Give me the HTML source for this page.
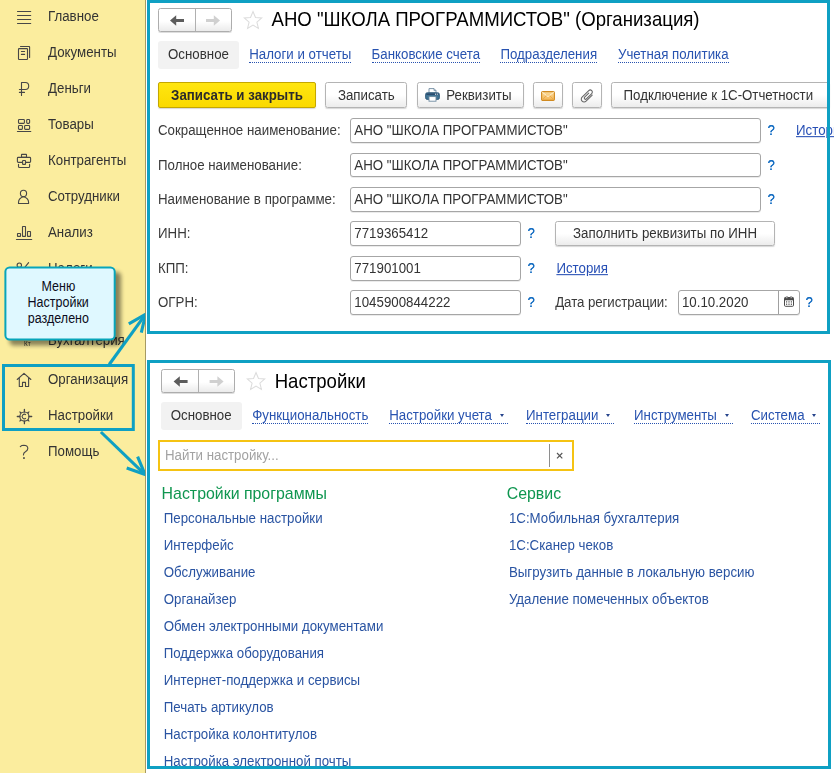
<!DOCTYPE html>
<html lang="ru">
<head>
<meta charset="utf-8">
<title>1C</title>
<style>
*{box-sizing:border-box;margin:0;padding:0}
html,body{width:834px;height:773px;overflow:hidden;background:#fff}
body{font-family:"Liberation Sans",sans-serif;font-size:13.3px;color:#333;position:relative}
.abs{position:absolute;white-space:nowrap}
.t{display:inline-block;transform:scaleY(1.055);transform-origin:50% 62%}
#side{position:absolute;left:0;top:0;width:146px;height:773px;background:#fbed9e;border-right:1px solid #a69a63}
.mi{position:absolute;left:48px;height:20px;line-height:20px;font-size:13.3px;color:#333;white-space:nowrap;transform:scaleY(1.055);transform-origin:0 62%}
.panel{position:absolute}
.frame{position:absolute;border:3px solid #0fa0c3;pointer-events:none}
.nav{position:absolute;height:24px;border:1px solid #adadad;border-radius:2.5px;background:linear-gradient(#fff 55%,#ebebeb);box-shadow:0 1px 0 rgba(0,0,0,.13)}
.nav i{position:absolute;left:35.6px;top:0;width:1px;height:22px;background:#b0b0b0}
.nav svg{position:absolute;top:0;left:0}
.star{position:absolute;width:20px;height:20px}
.title{position:absolute;font-size:18.6px;color:#000;white-space:nowrap;height:24px;line-height:24px;transform:scaleY(1.055);transform-origin:0 62%}
.tabsel{position:absolute;height:28px;line-height:28px;background:#f2f2f2;border-radius:3px;text-align:center;color:#333}
.tl{position:absolute;height:28px;line-height:28px;color:#2853b0;white-space:nowrap}
.tl span.u{display:inline-block;height:15px;line-height:14px;border-bottom:1px dotted #2853b0}
.tl b{display:inline-block;width:0;height:0;line-height:0;border-left:2.6px solid transparent;border-right:2.6px solid transparent;border-top:3px solid #27448c;vertical-align:2.4px;margin-left:4.2px;margin-right:4px}
.btn{position:absolute;height:26px;line-height:25.6px;border:1px solid #b4b4b4;border-radius:2.5px;background:linear-gradient(#fff 50%,#ececec);text-align:center;color:#333;white-space:nowrap;box-shadow:0 1px 1px rgba(0,0,0,.16)}
.btn.y{background:linear-gradient(#ffe610,#fad900);border-color:#c4a700;font-weight:bold;color:#2b2b2b;border-radius:2px}
.lbl{position:absolute;left:8px;height:24px;line-height:24px;white-space:nowrap;color:#3a3a3a;transform:scaleY(1.055);transform-origin:0 62%}
.inp{position:absolute;height:24.5px;line-height:24.6px;border:1px solid #a6a6a6;border-radius:3px;background:#fff;padding-left:3.3px;color:#333;white-space:nowrap;box-shadow:0 1px 0 rgba(0,0,0,.08)}
.q{position:absolute;width:12px;text-align:center;height:24px;line-height:24px;color:#176fc3;font-size:12.9px;transform:scaleY(1.12);transform-origin:50% 62%;text-shadow:.25px 0 0 #176fc3}
.lnk{position:absolute;height:24px;line-height:24px;color:#274fb5;text-decoration:underline;white-space:nowrap;transform:scaleY(1.055);transform-origin:0 62%}
.h{position:absolute;font-size:15.9px;color:#0f9650;white-space:nowrap;height:22px;line-height:22px;transform:scaleY(1.055);transform-origin:0 62%}
.sl{position:absolute;color:#2a54a2;white-space:nowrap;height:20px;line-height:20px;transform:scaleY(1.055);transform-origin:0 62%}
</style>
</head>
<body>
<div id="side">
  <div class="mi" style="top:7px">Главное</div>
  <div class="mi" style="top:43px">Документы</div>
  <div class="mi" style="top:79px">Деньги</div>
  <div class="mi" style="top:115px">Товары</div>
  <div class="mi" style="top:151px">Контрагенты</div>
  <div class="mi" style="top:187px">Сотрудники</div>
  <div class="mi" style="top:223px">Анализ</div>
  <div class="mi" style="top:259px">Налоги</div>
  <div class="mi" style="top:331px">Бухгалтерия</div>
  <div class="mi" style="top:370px">Организация</div>
  <div class="mi" style="top:406px">Настройки</div>
  <div class="mi" style="top:442px">Помощь</div>
  <svg class="abs" style="left:0;top:0" width="146" height="773" viewBox="0 0 146 773" fill="none" stroke="#474747" stroke-width="1.1" stroke-linecap="round" stroke-linejoin="round">
    <!-- hamburger -->
    <path d="M17.5 11.5H30.7M17.5 15.5H30.7M17.5 19.5H30.7M17.5 23.5H30.7"/>
    <!-- documents -->
    <rect x="18.5" y="48.6" width="9" height="10.9" rx="0.6"/>
    <path d="M20.5 46.5H29.2Q29.6 46.5 29.6 46.9V57.4M21.4 51.5H24.6M21.4 54.4H24.6"/>
    <!-- ruble -->
    <path d="M21.5 95.5V82.5H25.4Q28.7 82.5 28.7 86T25.4 89.5H19.4M19.4 92.4H24.5"/>
    <!-- goods -->
    <rect x="18.5" y="119.5" width="5.9" height="3.9" rx="0.8"/>
    <rect x="26.7" y="119.5" width="2.9" height="3.9" rx="0.8"/>
    <rect x="18.5" y="125.5" width="3.9" height="3.9" rx="0.8"/>
    <rect x="24.6" y="125.5" width="5" height="3.9" rx="0.8"/>
    <path d="M17.4 131.5H30.8"/>
    <!-- briefcase -->
    <rect x="21.5" y="154.4" width="5" height="3" rx="0.3"/>
    <rect x="17.4" y="157.4" width="13.2" height="5" rx="0.9"/>
    <rect x="22.6" y="160.5" width="2.9" height="3.9" rx="0.5" fill="#fbed9e"/>
    <path d="M18.5 164.4V166.5Q18.5 167.5 19.5 167.5H28.6Q29.6 167.5 29.6 166.5V164.4"/>
    <!-- person -->
    <circle cx="23.5" cy="193.4" r="3.1"/>
    <path d="M18.5 203.5H28.6V202.5Q28.6 198 23.5 196.7Q18.5 198 18.5 202.5Z"/>
    <!-- chart -->
    <rect x="17.5" y="233.5" width="3" height="2.9" rx="0.3"/>
    <rect x="22.5" y="226.5" width="3" height="9.9" rx="0.3"/>
    <rect x="27.5" y="231.5" width="3" height="4.9" rx="0.3"/>
    <path d="M16.4 239.5H31.7"/>
    <!-- percent (taxes) -->
    <circle cx="19.3" cy="265.2" r="2.2"/>
    <circle cx="27.7" cy="272.8" r="2.2"/>
    <path d="M28.6 262.6L18.4 275.4"/>
    <!-- home -->
    <path d="M17.2 379.5L24 373.3L30.9 379.5M19.3 377.8V386.5H22.5V382.4H25.5V386.5H28.6V377.8"/>
    <!-- gear -->
    <circle cx="24.4" cy="416.5" r="4.55" stroke-width="1.15"/>
    <path d="M24.4 409.3V411.9M24.4 421.1V423.7M17.3 416.5H19.8M29 416.5H31.7" stroke-width="1.3"/>
    <path d="M28.73 414.00L29.56 411.34L26.90 412.17ZM21.90 412.17L19.24 411.34L20.07 414.00ZM20.07 419.00L19.24 421.66L21.90 420.83ZM26.90 420.83L29.56 421.66L28.73 419.00Z" fill="#474747" stroke="none"/>
    <path d="M25.91 414.83A2.25 2.25 0 1 0 25.91 418.17" stroke-width="1.05" stroke-linecap="butt"/>
    <!-- help -->
    <path d="M20.3 446.6Q21.6 445.3 23.8 445.3Q27.9 445.5 27.8 448.6Q27.6 450.4 25.4 451.8Q23.4 453 23.4 454.9"/>
    <rect x="23.1" y="457.2" width="1.7" height="1.7" fill="#474747" stroke="none"/>
  </svg>
  <div class="abs" style="left:16.5px;top:328.5px;font-size:8px;line-height:10px;color:#333;transform:scale(.8,1);transform-origin:0 0">Дт</div>
  <div class="abs" style="left:23.8px;top:339.3px;font-size:8px;line-height:10px;color:#333;transform:scale(.8,1);transform-origin:0 0">Кт</div>
</div>
<div class="panel" style="left:150px;top:3px;width:684px;height:331px">
  <div class="nav" style="left:8px;top:5px;width:74px"><i></i><svg width="72" height="22" viewBox="0 0 72 22"><path d="M11 11.5 L17.2 6.3 V9.9 H25 V13.1 H17.2 V16.7 Z" fill="#5c5c5c"/><path d="M61 11.5 L54.8 6.3 V9.9 H47 V13.1 H54.8 V16.7 Z" fill="#d0d0d0"/></svg></div>
  <svg class="star" style="left:92.9px;top:7.2px" viewBox="0 0 21 21"><path d="M10.5 1.6 L13.1 7.9 L19.7 8.4 L14.6 12.8 L16.2 19.4 L10.5 15.9 L4.8 19.4 L6.4 12.8 L1.3 8.4 L7.9 7.9 Z" fill="#fff" stroke="#dcdcdc" stroke-width="1.1"/></svg>
  <div class="title" style="left:121.5px;top:5px">АНО "ШКОЛА ПРОГРАММИСТОВ" (Организация)</div>
  <div class="tabsel" style="left:8px;top:38px;width:81px"><span class="t">Основное</span></div>
  <div class="tl" style="left:99.2px;top:38px"><span class="u"><span class="t">Налоги и отчеты</span></span></div>
  <div class="tl" style="left:221.6px;top:38px"><span class="u"><span class="t">Банковские счета</span></span></div>
  <div class="tl" style="left:350.4px;top:38px"><span class="u"><span class="t">Подразделения</span></span></div>
  <div class="tl" style="left:468px;top:38px"><span class="u"><span class="t">Учетная политика</span></span></div>
  <div class="btn y" style="left:8px;top:79px;width:158px"><span class="t">Записать и закрыть</span></div>
  <div class="btn" style="left:175.2px;top:79px;width:82.3px"><span class="t">Записать</span></div>
  <div class="btn" style="left:267px;top:79px;width:106.5px;text-align:left;padding-left:28.3px"><span class="t">Реквизиты</span>
    <svg style="position:absolute;left:7px;top:5.4px" width="15" height="14" viewBox="0 0 15 14"><path d="M4 5V0.6H9L11 2.6V5Z" fill="#fff" stroke="#6f8aa0" stroke-width=".9"/><path d="M9 0.6V2.6H11" fill="none" stroke="#6f8aa0" stroke-width=".8"/><rect x="0.6" y="4.8" width="13.8" height="6.6" rx="1.6" fill="#3f7393" stroke="#2f5878" stroke-width=".9"/><rect x="1.4" y="5.4" width="12.2" height="1.6" rx=".6" fill="#2b4a6c"/><rect x="10" y="5.7" width="1" height="1" fill="#fff"/><rect x="11.8" y="5.7" width="1" height="1" fill="#fff"/><rect x="4" y="8.6" width="7" height="4.6" fill="#fff" stroke="#6f8aa0" stroke-width=".9"/></svg>
  </div>
  <div class="btn" style="left:383.2px;top:79px;width:29.6px">
    <svg style="position:absolute;left:7px;top:8.4px" width="14" height="10" viewBox="0 0 14 10"><defs><linearGradient id="mg" x1="0" y1="0" x2="0" y2="1"><stop offset="0" stop-color="#fbdc9c"/><stop offset="1" stop-color="#f4b453"/></linearGradient></defs><rect x="0.6" y="0.6" width="12.8" height="8.8" rx="1.2" fill="url(#mg)" stroke="#d08a20" stroke-width="1.1"/><path d="M1.2 1.2L7 5.6L12.8 1.2" fill="none" stroke="#fff1d0" stroke-width="1"/><path d="M1.2 8.8L5.4 4.6M12.8 8.8L8.6 4.6" fill="none" stroke="#e9a94a" stroke-width=".9"/></svg>
  </div>
  <div class="btn" style="left:422.2px;top:79px;width:29.6px">
    <svg style="position:absolute;left:0;top:0" width="28" height="24" viewBox="0 0 28 24"><g transform="translate(9.1,18.2) rotate(-45)" fill="none" stroke="#666" stroke-width="1.05" stroke-linecap="round"><path d="M11.5 2.8H2.8A2.8 2.8 0 0 1 2.8 -2.8H12.2A2.1 2.1 0 0 1 12.2 1.4H4.6A1.2 1.2 0 0 1 4.6 -1H10.4"/></g></svg>
  </div>
  <div class="btn" style="left:461px;top:79px;width:218.5px;text-align:left;padding-left:11.6px;letter-spacing:-.03px"><span class="t">Подключение к 1С-Отчетности</span></div>
  <div class="lbl" style="top:116.1px">Сокращенное наименование:</div>
  <div class="inp" style="left:200px;top:115.1px;width:411px"><span class="t">АНО "ШКОЛА ПРОГРАММИСТОВ"</span></div>
  <div class="q" style="left:615px;top:116.1px">?</div>
  <div class="lbl" style="top:150.7px">Полное наименование:</div>
  <div class="inp" style="left:200px;top:149.7px;width:411px"><span class="t">АНО "ШКОЛА ПРОГРАММИСТОВ"</span></div>
  <div class="q" style="left:615px;top:150.7px">?</div>
  <div class="lbl" style="top:185.2px">Наименование в программе:</div>
  <div class="inp" style="left:200px;top:184.2px;width:411px"><span class="t">АНО "ШКОЛА ПРОГРАММИСТОВ"</span></div>
  <div class="q" style="left:615px;top:185.2px">?</div>
  <div class="lbl" style="top:219.1px">ИНН:</div>
  <div class="inp" style="left:200px;top:218.1px;width:171px"><span class="t">7719365412</span></div>
  <div class="q" style="left:375px;top:219.1px">?</div>
  <div class="lbl" style="top:254.2px">КПП:</div>
  <div class="inp" style="left:200px;top:253.2px;width:171px"><span class="t">771901001</span></div>
  <div class="q" style="left:375px;top:254.2px">?</div>
  <div class="lbl" style="top:288.1px">ОГРН:</div>
  <div class="inp" style="left:200px;top:287.1px;width:171px"><span class="t">1045900844222</span></div>
  <div class="q" style="left:375px;top:288.1px">?</div>
  <div class="lnk" style="left:646px;top:116.1px">История</div>
  <div class="btn" style="left:405px;top:218px;width:220px;height:25px;line-height:24.4px"><span class="t">Заполнить реквизиты по ИНН</span></div>
  <div class="lnk" style="left:406.4px;top:254.2px">История</div>
  <div class="lbl" style="left:405.2px;top:288.1px;letter-spacing:-.08px">Дата регистрации:</div>
  <div class="inp" style="left:527.6px;top:287.1px;width:122px"><span class="t">10.10.2020</span>
    <i style="position:absolute;left:99.6px;top:0;width:1px;height:23px;background:#a0a0a0"></i>
    <svg style="position:absolute;left:105.3px;top:5.2px" width="10" height="11" viewBox="0 0 10 11"><rect x="0.5" y="1.5" width="9" height="8.8" rx="1" fill="#fff" stroke="#4a4a4a" stroke-width="1"/><rect x="0.5" y="1.5" width="9" height="2.8" fill="#4a4a4a"/><rect x="2.2" y="0.3" width="1.3" height="2" rx=".5" fill="#fff" stroke="#4a4a4a" stroke-width=".5"/><rect x="6.5" y="0.3" width="1.3" height="2" rx=".5" fill="#fff" stroke="#4a4a4a" stroke-width=".5"/><g fill="#4a4a4a"><rect x="2" y="5.3" width="1.2" height="1.2"/><rect x="4.4" y="5.3" width="1.2" height="1.2"/><rect x="6.8" y="5.3" width="1.2" height="1.2"/><rect x="2" y="7.6" width="1.2" height="1.2"/><rect x="4.4" y="7.6" width="1.2" height="1.2"/><rect x="6.8" y="7.6" width="1.2" height="1.2"/></g></svg>
  </div>
  <div class="q" style="left:653px;top:288.1px">?</div>
</div>
<div class="panel" style="left:150px;top:363px;width:684px;height:403px;overflow:hidden">
  <div class="nav" style="left:10.7px;top:6px;width:74.5px"><i style="left:36.5px"></i><svg width="72" height="22" viewBox="-0.6 0 72 22"><path d="M11 11.5 L17.2 6.3 V9.9 H25 V13.1 H17.2 V16.7 Z" fill="#5c5c5c"/><path d="M61 11.5 L54.8 6.3 V9.9 H47 V13.1 H54.8 V16.7 Z" fill="#d0d0d0"/></svg></div>
  <svg class="star" style="left:95.9px;top:7.9px" viewBox="0 0 21 21"><path d="M10.5 1.6 L13.1 7.9 L19.7 8.4 L14.6 12.8 L16.2 19.4 L10.5 15.9 L4.8 19.4 L6.4 12.8 L1.3 8.4 L7.9 7.9 Z" fill="#fff" stroke="#dcdcdc" stroke-width="1.1"/></svg>
  <div class="title" style="left:124.7px;top:7px">Настройки</div>
  <div class="tabsel" style="left:10.7px;top:38.7px;width:81px"><span class="t">Основное</span></div>
  <div class="tl" style="left:102.2px;top:38.8px"><span class="u"><span class="t">Функциональность</span></span></div>
  <div class="tl" style="left:239.2px;top:38.8px"><span class="u"><span class="t">Настройки учета</span> <b></b></span></div>
  <div class="tl" style="left:376px;top:38.8px"><span class="u"><span class="t">Интеграции</span> <b></b></span></div>
  <div class="tl" style="left:484px;top:38.8px"><span class="u"><span class="t">Инструменты</span> <b></b></span></div>
  <div class="tl" style="left:601px;top:38.8px"><span class="u"><span class="t">Система</span> <b></b></span></div>
  <div class="abs" style="left:8px;top:77px;width:416px;height:31px;border:2px solid #f5c313;border-radius:0;background:#fff">
    <div class="abs" style="left:5px;top:-0.2px;height:27px;line-height:27px;color:#a2a2a2"><span class="t">Найти настройку...</span></div>
    <i class="abs" style="left:389px;top:2px;width:1px;height:23px;background:#8e8e8e"></i>
    <svg class="abs" style="left:394px;top:8px" width="12" height="12" viewBox="0 0 12 12"><path d="M3 3L8.3 8.3M8.3 3L3 8.3" stroke="#555" stroke-width="1.15" fill="none"/></svg>
  </div>
  <div class="h" style="left:11.6px;top:120px">Настройки программы</div>
  <div class="h" style="left:356.7px;top:120px">Сервис</div>
  <div class="sl" style="left:13.7px;top:145.7px">Персональные настройки</div>
  <div class="sl" style="left:13.7px;top:172.7px">Интерфейс</div>
  <div class="sl" style="left:13.7px;top:199.7px">Обслуживание</div>
  <div class="sl" style="left:13.7px;top:226.7px">Органайзер</div>
  <div class="sl" style="left:13.7px;top:253.7px">Обмен электронными документами</div>
  <div class="sl" style="left:13.7px;top:280.7px">Поддержка оборудования</div>
  <div class="sl" style="left:13.7px;top:307.7px">Интернет-поддержка и сервисы</div>
  <div class="sl" style="left:13.7px;top:334.7px">Печать артикулов</div>
  <div class="sl" style="left:13.7px;top:361.7px">Настройка колонтитулов</div>
  <div class="sl" style="left:13.7px;top:388.7px">Настройка электронной почты</div>
  <div class="sl" style="left:358.9px;top:145.7px">1С:Мобильная бухгалтерия</div>
  <div class="sl" style="left:358.9px;top:172.7px">1С:Сканер чеков</div>
  <div class="sl" style="left:358.9px;top:199.7px">Выгрузить данные в локальную версию</div>
  <div class="sl" style="left:358.9px;top:226.7px">Удаление помеченных объектов</div>
</div>
<div class="frame" style="left:147px;top:0;width:683px;height:334px"></div>
<div class="frame" style="left:147px;top:360px;width:684px;height:409px"></div>
<div class="abs" style="left:147px;top:766px;width:687px;height:7px;background:#fff"></div>
<div class="abs" style="left:147px;top:766px;width:684px;height:3px;background:#0fa0c3"></div>
<svg class="abs" id="ann" style="left:0;top:0" width="834" height="773" viewBox="0 0 834 773">
  <defs>
    <filter id="sh" x="-20%" y="-20%" width="150%" height="150%">
      <feGaussianBlur stdDeviation="2.1"/>
    </filter>
    <clipPath id="cl"><rect x="0" y="0" width="145.3" height="773"/></clipPath>
  </defs>
  <!-- highlight rectangle -->
  <rect x="3.5" y="365.5" width="129.8" height="64" fill="none" stroke="#0fa0c3" stroke-width="3"/>
  <!-- arrows -->
  <g fill="none" stroke="#0fa0c3" stroke-width="3.1" stroke-linecap="butt" stroke-linejoin="miter" clip-path="url(#cl)">
    <path d="M109.2 364.5L144.4 315.9"/>
    <path d="M128.8 323.8L145.6 314.3L141.3 332.6"/>
    <path d="M100.9 432L143.8 473.3"/>
    <path d="M126.7 468L145 474.5L137.6 456.7"/>
  </g>
  <!-- callout -->
  <rect x="9.5" y="272" width="111.5" height="73.5" rx="4.2" fill="#000" opacity=".45" filter="url(#sh)"/>
  <rect x="5.4" y="267.4" width="109.3" height="72" rx="4.2" fill="#dff8ff" stroke="#08a5ba" stroke-width="2"/>
  <g font-family="Liberation Sans, sans-serif" font-size="12.5" fill="#0c0c20" text-anchor="middle">
    <text transform="translate(58.4,290.9) scale(1,1.1)">Меню</text>
    <text transform="translate(58.2,306.9) scale(1,1.1)">Настройки</text>
    <text transform="translate(58.4,322.6) scale(1,1.1)">разделено</text>
  </g>
</svg>

</body>
</html>
